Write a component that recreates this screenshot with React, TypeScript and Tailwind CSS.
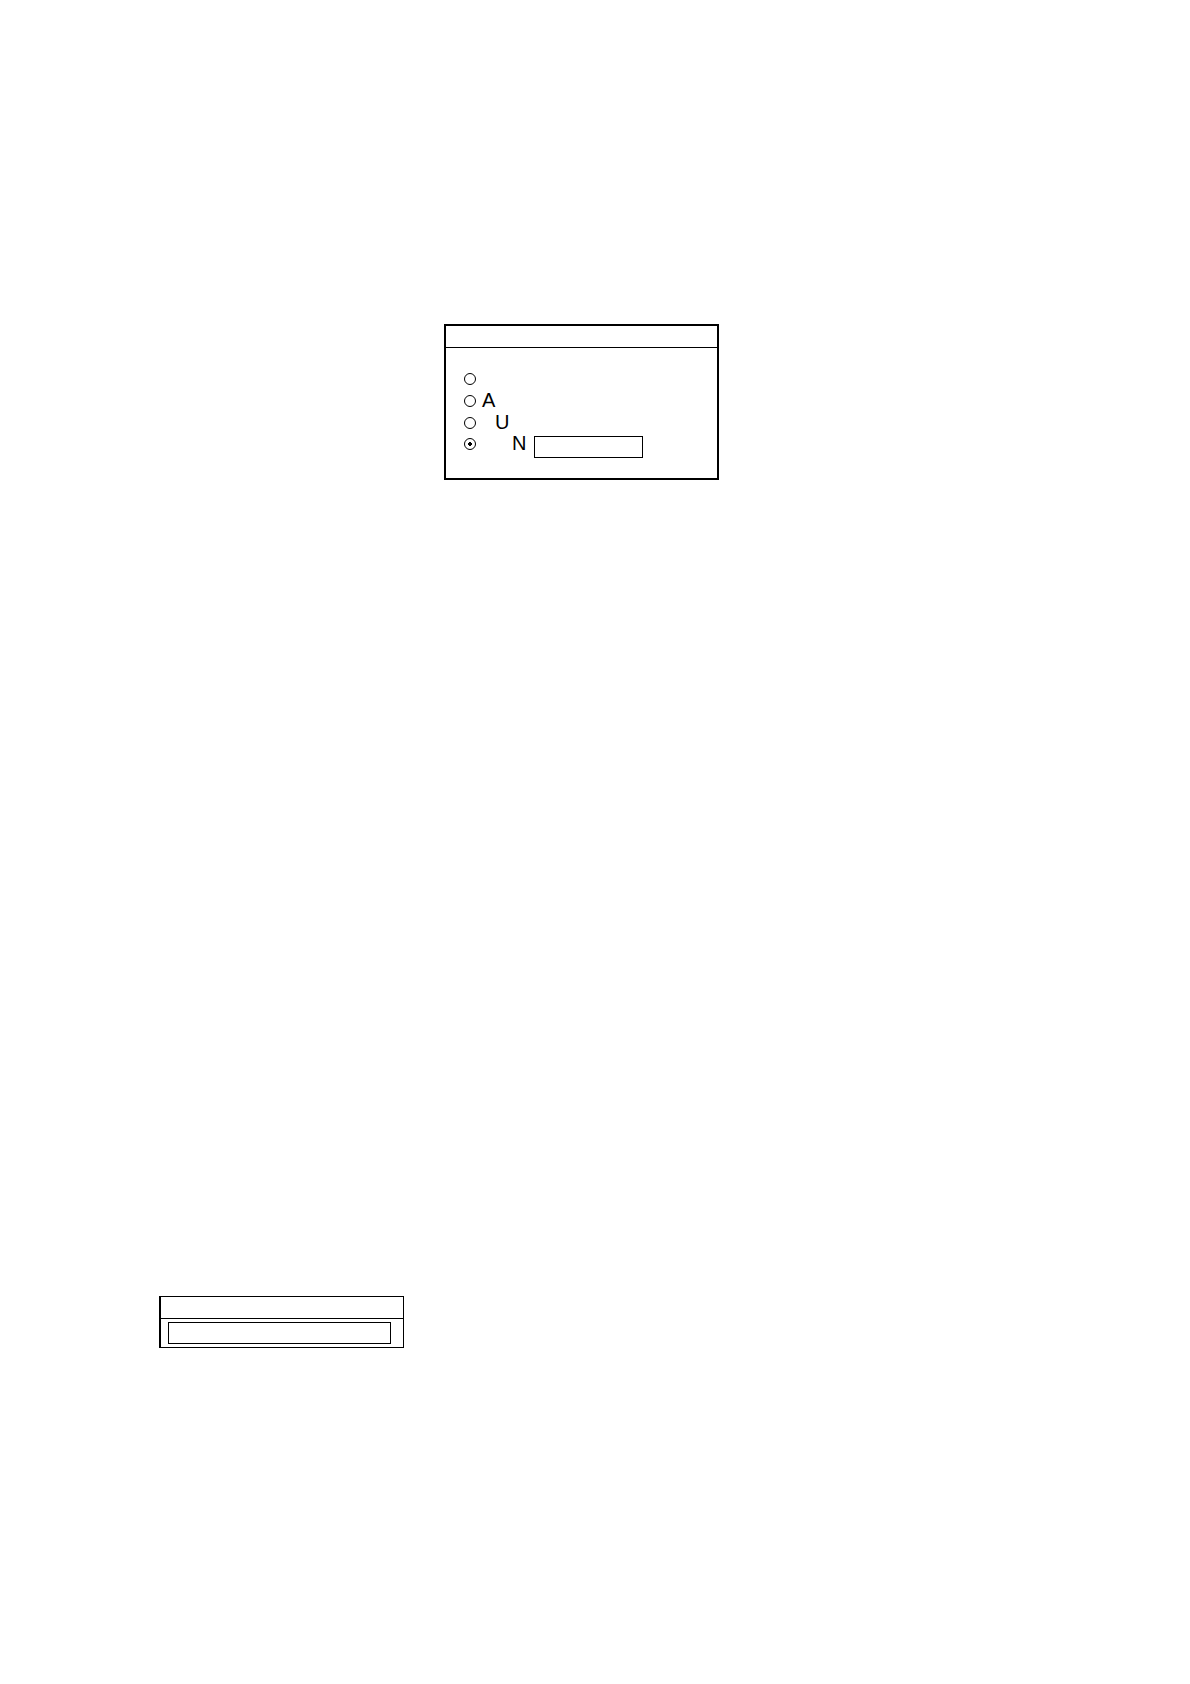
import React, { useState } from "react";
import clsx from "clsx";

const OPTIONS = [
  { id: "first", text: "", indent: "" },
  { id: "a", text: "A", indent: "" },
  { id: "u", text: "U", indent: "pl-[13px]" },
];

type RadioRowProps = {
  id: string;
  text: string;
  indent: string;
  checked: boolean;
  onSelect: (id: string) => void;
};

const RadioRow = ({ id, text, indent, checked, onSelect }: RadioRowProps) => (
  <div className="flex h-[21px] items-start gap-[6px]">
    <input
      type="radio"
      id={id}
      name="option"
      aria-label={text ? undefined : "First option"}
      checked={checked}
      onChange={() => onSelect(id)}
      className="mt-1 size-3 shrink-0 appearance-none rounded-full border border-black checked:bg-[radial-gradient(circle,#000_2px,transparent_2px)]"
    />
    {text && (
      <label htmlFor={id} className={clsx("text-[20px] leading-[18px]", indent)}>
        {text}
      </label>
    )}
  </div>
);

const OptionDialog = () => {
  const [selected, setSelected] = useState("n");
  const [value, setValue] = useState("");

  return (
    <section className="ml-[444px] w-[275px] border-2 border-black">
      <header className="h-[22px] border-b border-black" />
      <div className="pt-[21px] pb-5 pl-[18px]">
        <div className="flex flex-col gap-px">
          {OPTIONS.map((option) => (
            <RadioRow
              key={option.id}
              {...option}
              checked={selected === option.id}
              onSelect={setSelected}
            />
          ))}
        </div>
        <div className="flex items-start gap-2">
          <RadioRow
            id="n"
            text="N"
            indent="pl-[30px]"
            checked={selected === "n"}
            onSelect={setSelected}
          />
          <input
            type="text"
            aria-label="N"
            value={value}
            onChange={(e) => setValue(e.target.value)}
            className="mt-0.5 h-[22px] w-[109px] border border-black px-1 text-sm outline-none"
          />
        </div>
      </div>
    </section>
  );
};

const EntryPanel = () => {
  const [value, setValue] = useState("");

  return (
    <section className="mt-[816px] ml-[159px] w-[245px] border border-l-2 border-black">
      <header className="h-[22px] border-b border-black" />
      <div className="flex py-[3px] pr-3 pl-[7px]">
        <input
          type="text"
          aria-label="Entry"
          value={value}
          onChange={(e) => setValue(e.target.value)}
          className="h-[22px] w-full border border-black px-1 text-sm outline-none"
        />
      </div>
    </section>
  );
};

const App = () => {
  return (
    <main className="min-h-screen bg-white pt-[324px] font-['Liberation_Sans',Arial,sans-serif] text-black antialiased">
      <OptionDialog />
      <EntryPanel />
    </main>
  );
};

export default App;
